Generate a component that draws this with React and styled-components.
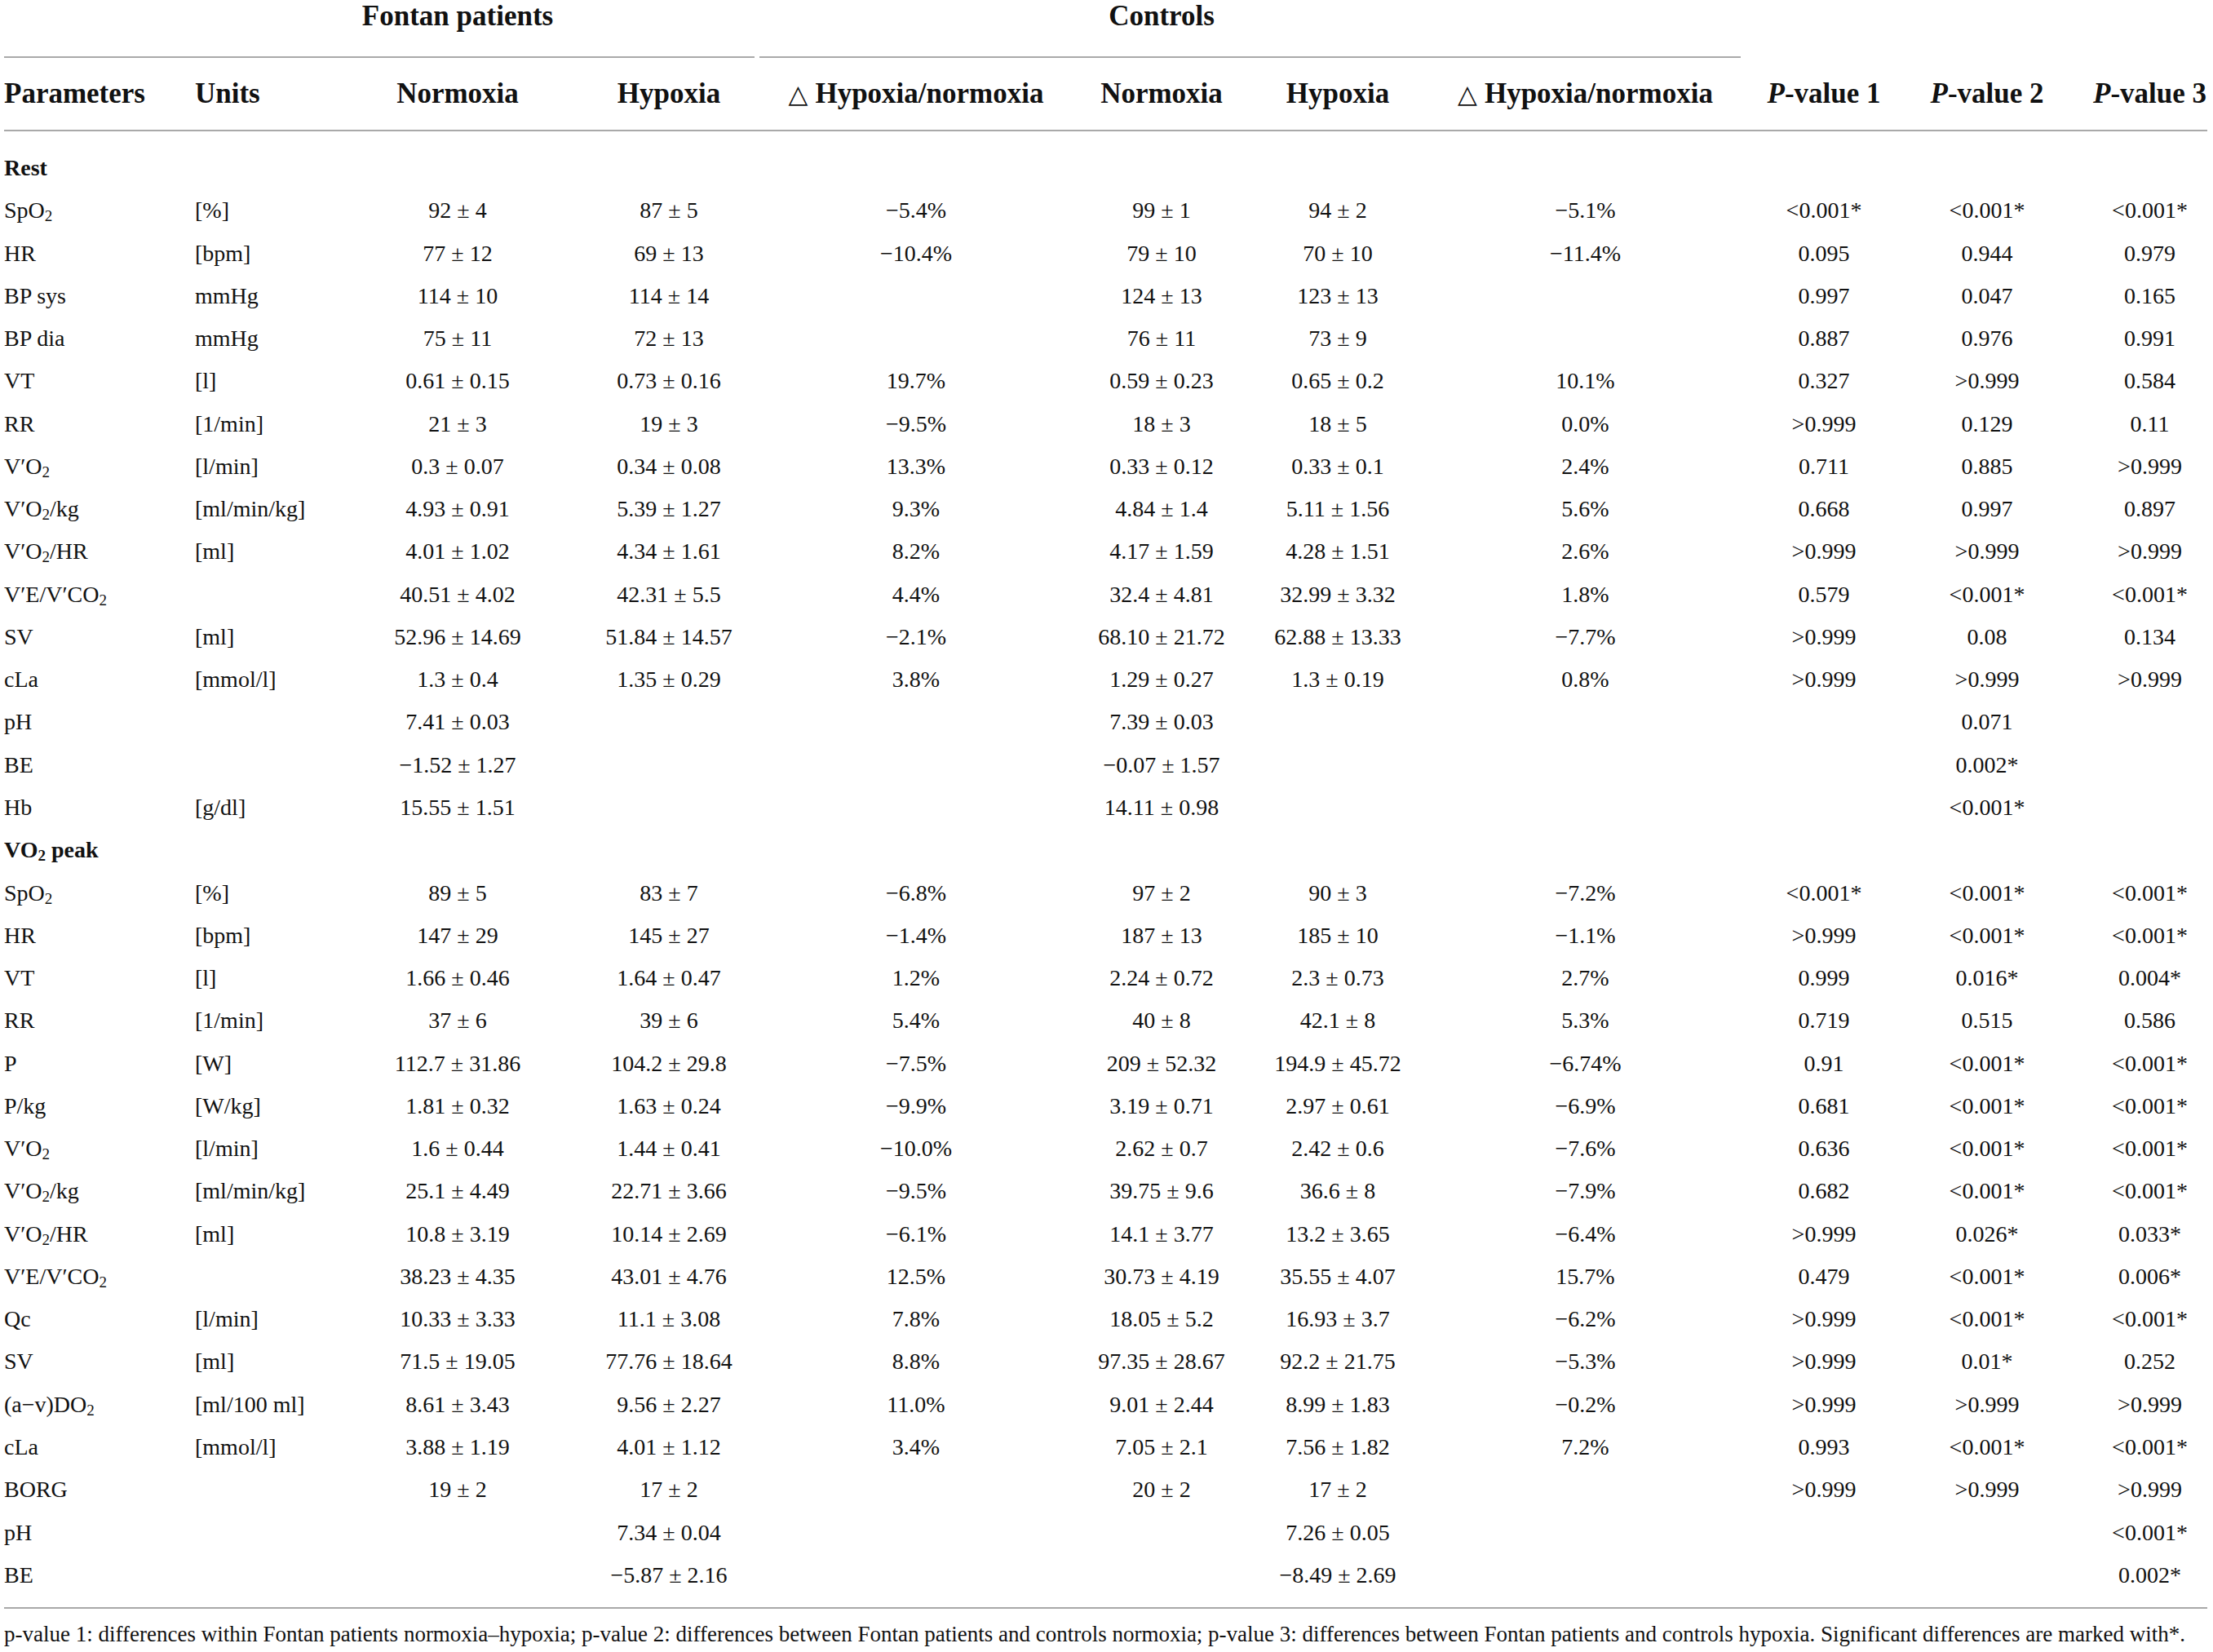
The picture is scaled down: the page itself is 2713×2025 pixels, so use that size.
import React from "react";
import styled, { createGlobalStyle } from "styled-components";

const COLS =
  "234px 171px 302px 216px 390px 212px 220px 387px 198px 202px 169px";

const GlobalStyle = createGlobalStyle`
  body {
    margin: 0;
    background: #ffffff;
    color: #111111;
    font-family: "Liberation Serif", "Times New Roman", serif;
  }
`;

const Page = styled.div`
  padding: 0 0 0 5px;
  width: 2701px;
`;

const GroupRow = styled.div`
  display: grid;
  grid-template-columns: ${COLS};
`;

const GroupLabel = styled.div`
  grid-row: 1;
  grid-column: ${(p) => p.$col};
  text-align: center;
  font-size: 35px;
  font-weight: 700;
  line-height: 40px;
  padding-bottom: 29px;
`;

const GroupRule = styled.div`
  grid-row: 2;
  grid-column: ${(p) => p.$span};
  height: 2px;
  background: #a9a9a9;
  margin: ${(p) => p.$margin};
`;

const HeadRow = styled.div`
  display: grid;
  grid-template-columns: ${COLS};
  padding: 24px 0;
  border-bottom: 2px solid #a9a9a9;
  font-size: 35px;
  font-weight: 700;
  line-height: 40px;
`;

const HeadCell = styled.div`
  text-align: ${(p) => (p.$left ? "left" : "center")};
  white-space: nowrap;
  padding-left: ${(p) => (p.$shift ? "28px" : "0")};

  i {
    font-style: italic;
  }
`;

const Delta = styled.span`
  font-family: "DejaVu Sans", sans-serif;
  font-weight: 400;
  font-size: 31px;
  line-height: 0;
  margin-right: 9px;
`;

const Body = styled.div`
  padding: 19px 0 13px;
  border-bottom: 2px solid #a9a9a9;
`;

const Row = styled.div`
  display: grid;
  grid-template-columns: ${COLS};
  font-size: 28px;
  line-height: 52.27px;
  font-weight: ${(p) => (p.$section ? 700 : 400)};
`;

const Cell = styled.div`
  text-align: ${(p) => (p.$left ? "left" : "center")};
  white-space: nowrap;
  padding-left: ${(p) => (p.$shift ? "28px" : "0")};

  sub {
    font-size: 0.68em;
    line-height: 0;
    vertical-align: -0.22em;
  }
`;

const Note = styled.p`
  margin: 16px 0 0;
  font-size: 27px;
  line-height: 30px;
  white-space: nowrap;
`;

// "_2" in a label becomes a subscript 2
function Label({ text }) {
  const parts = text.split("_");
  return (
    <>
      {parts.map((part, i) =>
        i === 0 ? (
          part
        ) : (
          <React.Fragment key={i}>
            <sub>{part[0]}</sub>
            {part.slice(1)}
          </React.Fragment>
        )
      )}
    </>
  );
}

const rest = [
  ["SpO_2", "[%]", "92 ± 4", "87 ± 5", "−5.4%", "99 ± 1", "94 ± 2", "−5.1%", "<0.001*", "<0.001*", "<0.001*"],
  ["HR", "[bpm]", "77 ± 12", "69 ± 13", "−10.4%", "79 ± 10", "70 ± 10", "−11.4%", "0.095", "0.944", "0.979"],
  ["BP sys", "mmHg", "114 ± 10", "114 ± 14", "", "124 ± 13", "123 ± 13", "", "0.997", "0.047", "0.165"],
  ["BP dia", "mmHg", "75 ± 11", "72 ± 13", "", "76 ± 11", "73 ± 9", "", "0.887", "0.976", "0.991"],
  ["VT", "[l]", "0.61 ± 0.15", "0.73 ± 0.16", "19.7%", "0.59 ± 0.23", "0.65 ± 0.2", "10.1%", "0.327", ">0.999", "0.584"],
  ["RR", "[1/min]", "21 ± 3", "19 ± 3", "−9.5%", "18 ± 3", "18 ± 5", "0.0%", ">0.999", "0.129", "0.11"],
  ["V′O_2", "[l/min]", "0.3 ± 0.07", "0.34 ± 0.08", "13.3%", "0.33 ± 0.12", "0.33 ± 0.1", "2.4%", "0.711", "0.885", ">0.999"],
  ["V′O_2/kg", "[ml/min/kg]", "4.93 ± 0.91", "5.39 ± 1.27", "9.3%", "4.84 ± 1.4", "5.11 ± 1.56", "5.6%", "0.668", "0.997", "0.897"],
  ["V′O_2/HR", "[ml]", "4.01 ± 1.02", "4.34 ± 1.61", "8.2%", "4.17 ± 1.59", "4.28 ± 1.51", "2.6%", ">0.999", ">0.999", ">0.999"],
  ["V′E/V′CO_2", "", "40.51 ± 4.02", "42.31 ± 5.5", "4.4%", "32.4 ± 4.81", "32.99 ± 3.32", "1.8%", "0.579", "<0.001*", "<0.001*"],
  ["SV", "[ml]", "52.96 ± 14.69", "51.84 ± 14.57", "−2.1%", "68.10 ± 21.72", "62.88 ± 13.33", "−7.7%", ">0.999", "0.08", "0.134"],
  ["cLa", "[mmol/l]", "1.3 ± 0.4", "1.35 ± 0.29", "3.8%", "1.29 ± 0.27", "1.3 ± 0.19", "0.8%", ">0.999", ">0.999", ">0.999"],
  ["pH", "", "7.41 ± 0.03", "", "", "7.39 ± 0.03", "", "", "", "0.071", ""],
  ["BE", "", "−1.52 ± 1.27", "", "", "−0.07 ± 1.57", "", "", "", "0.002*", ""],
  ["Hb", "[g/dl]", "15.55 ± 1.51", "", "", "14.11 ± 0.98", "", "", "", "<0.001*", ""],
];

const peak = [
  ["SpO_2", "[%]", "89 ± 5", "83 ± 7", "−6.8%", "97 ± 2", "90 ± 3", "−7.2%", "<0.001*", "<0.001*", "<0.001*"],
  ["HR", "[bpm]", "147 ± 29", "145 ± 27", "−1.4%", "187 ± 13", "185 ± 10", "−1.1%", ">0.999", "<0.001*", "<0.001*"],
  ["VT", "[l]", "1.66 ± 0.46", "1.64 ± 0.47", "1.2%", "2.24 ± 0.72", "2.3 ± 0.73", "2.7%", "0.999", "0.016*", "0.004*"],
  ["RR", "[1/min]", "37 ± 6", "39 ± 6", "5.4%", "40 ± 8", "42.1 ± 8", "5.3%", "0.719", "0.515", "0.586"],
  ["P", "[W]", "112.7 ± 31.86", "104.2 ± 29.8", "−7.5%", "209 ± 52.32", "194.9 ± 45.72", "−6.74%", "0.91", "<0.001*", "<0.001*"],
  ["P/kg", "[W/kg]", "1.81 ± 0.32", "1.63 ± 0.24", "−9.9%", "3.19 ± 0.71", "2.97 ± 0.61", "−6.9%", "0.681", "<0.001*", "<0.001*"],
  ["V′O_2", "[l/min]", "1.6 ± 0.44", "1.44 ± 0.41", "−10.0%", "2.62 ± 0.7", "2.42 ± 0.6", "−7.6%", "0.636", "<0.001*", "<0.001*"],
  ["V′O_2/kg", "[ml/min/kg]", "25.1 ± 4.49", "22.71 ± 3.66", "−9.5%", "39.75 ± 9.6", "36.6 ± 8", "−7.9%", "0.682", "<0.001*", "<0.001*"],
  ["V′O_2/HR", "[ml]", "10.8 ± 3.19", "10.14 ± 2.69", "−6.1%", "14.1 ± 3.77", "13.2 ± 3.65", "−6.4%", ">0.999", "0.026*", "0.033*"],
  ["V′E/V′CO_2", "", "38.23 ± 4.35", "43.01 ± 4.76", "12.5%", "30.73 ± 4.19", "35.55 ± 4.07", "15.7%", "0.479", "<0.001*", "0.006*"],
  ["Qc", "[l/min]", "10.33 ± 3.33", "11.1 ± 3.08", "7.8%", "18.05 ± 5.2", "16.93 ± 3.7", "−6.2%", ">0.999", "<0.001*", "<0.001*"],
  ["SV", "[ml]", "71.5 ± 19.05", "77.76 ± 18.64", "8.8%", "97.35 ± 28.67", "92.2 ± 21.75", "−5.3%", ">0.999", "0.01*", "0.252"],
  ["(a−v)DO_2", "[ml/100 ml]", "8.61 ± 3.43", "9.56 ± 2.27", "11.0%", "9.01 ± 2.44", "8.99 ± 1.83", "−0.2%", ">0.999", ">0.999", ">0.999"],
  ["cLa", "[mmol/l]", "3.88 ± 1.19", "4.01 ± 1.12", "3.4%", "7.05 ± 2.1", "7.56 ± 1.82", "7.2%", "0.993", "<0.001*", "<0.001*"],
  ["BORG", "", "19 ± 2", "17 ± 2", "", "20 ± 2", "17 ± 2", "", ">0.999", ">0.999", ">0.999"],
  ["pH", "", "", "7.34 ± 0.04", "", "", "7.26 ± 0.05", "", "", "", "<0.001*"],
  ["BE", "", "", "−5.87 ± 2.16", "", "", "−8.49 ± 2.69", "", "", "", "0.002*"],
];

function DataRow({ cells }) {
  return (
    <Row>
      {cells.map((c, i) => (
        <Cell key={i} $left={i < 2} $shift={i === 10}>
          {i === 0 ? <Label text={c} /> : c}
        </Cell>
      ))}
    </Row>
  );
}

function SectionRow({ title }) {
  return (
    <Row $section>
      <Cell $left>
        <Label text={title} />
      </Cell>
    </Row>
  );
}

export default function App() {
  return (
    <Page>
      <GlobalStyle />
      <GroupRow>
        <GroupLabel $col="3">Fontan patients</GroupLabel>
        <GroupLabel $col="6">Controls</GroupLabel>
        <GroupRule $span="1 / 5" $margin="0 3px 0 0" />
        <GroupRule $span="5 / 9" $margin="0 3px 0 3px" />
      </GroupRow>
      <HeadRow>
        <HeadCell $left>Parameters</HeadCell>
        <HeadCell $left>Units</HeadCell>
        <HeadCell>Normoxia</HeadCell>
        <HeadCell>Hypoxia</HeadCell>
        <HeadCell>
          <Delta>△</Delta>Hypoxia/normoxia
        </HeadCell>
        <HeadCell>Normoxia</HeadCell>
        <HeadCell>Hypoxia</HeadCell>
        <HeadCell>
          <Delta>△</Delta>Hypoxia/normoxia
        </HeadCell>
        <HeadCell>
          <i>P</i>-value 1
        </HeadCell>
        <HeadCell>
          <i>P</i>-value 2
        </HeadCell>
        <HeadCell $shift>
          <i>P</i>-value 3
        </HeadCell>
      </HeadRow>
      <Body>
        <SectionRow title="Rest" />
        {rest.map((r, i) => (
          <DataRow key={"r" + i} cells={r} />
        ))}
        <SectionRow title="VO_2 peak" />
        {peak.map((r, i) => (
          <DataRow key={"p" + i} cells={r} />
        ))}
      </Body>
      <Note>
        p-value 1: differences within Fontan patients normoxia–hypoxia; p-value
        2: differences between Fontan patients and controls normoxia; p-value 3:
        differences between Fontan patients and controls hypoxia. Significant
        differences are marked with*.
      </Note>
    </Page>
  );
}
